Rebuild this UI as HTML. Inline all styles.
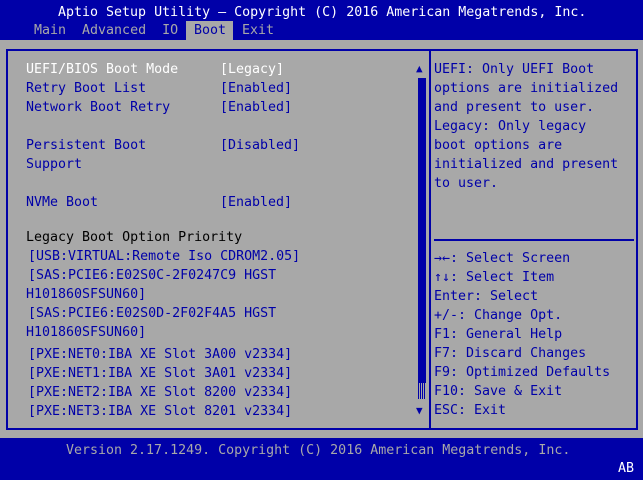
<!DOCTYPE html>
<html><head><style>
*{margin:0;padding:0}
body{width:643px;height:480px;background:#a8a8a8;position:relative;overflow:hidden;font-family:"DejaVu Sans Mono","Liberation Mono",monospace;font-size:13.3px;line-height:19px}
.a{position:absolute;white-space:pre}
.w{color:#fff}.b{color:#0000a8}.k{color:#000}.g{color:#a8a8a8}
</style></head><body>
<div class="a" style="left:0;top:0;width:643px;height:40px;background:#0000a8"></div>
<div class="a" style="left:186px;top:21px;width:47px;height:19px;background:#a8a8a8"></div>
<div class="a w" style="left:58px;top:3px">Aptio Setup Utility – Copyright (C) 2016 American Megatrends, Inc.</div>
<div class="a g" style="left:34px;top:21px">Main  Advanced  IO  </div>
<div class="a b" style="left:194px;top:21px">Boot</div>
<div class="a g" style="left:242px;top:21px">Exit</div>
<div class="a" style="left:6px;top:49px;width:628px;height:377px;border:2px solid #0000a8"></div>
<div class="a" style="left:429px;top:49px;width:2px;height:381px;background:#0000a8"></div>
<div class="a" style="left:434px;top:239px;width:200px;height:2px;background:#0000a8"></div>
<div class="a" style="left:418px;top:78px;width:8px;height:305px;background:#0000a8"></div>
<div class="a" style="left:418px;top:383px;width:8px;height:16px;background:repeating-linear-gradient(90deg,#0000a8 0 1px,#a8a8a8 1px 2px)"></div>
<div class="a b" style="left:416px;top:59px;font-size:11px">▲</div>
<div class="a b" style="left:416px;top:401px;font-size:11px">▼</div>
<div class="a w" style="left:26px;top:60px">UEFI/BIOS Boot Mode</div><div class="a w" style="left:220px;top:60px">[Legacy]</div>
<div class="a b" style="left:26px;top:79px">Retry Boot List</div><div class="a b" style="left:220px;top:79px">[Enabled]</div>
<div class="a b" style="left:26px;top:98px">Network Boot Retry</div><div class="a b" style="left:220px;top:98px">[Enabled]</div>
<div class="a b" style="left:26px;top:136px">Persistent Boot</div><div class="a b" style="left:220px;top:136px">[Disabled]</div>
<div class="a b" style="left:26px;top:155px">Support</div>
<div class="a b" style="left:26px;top:193px">NVMe Boot</div><div class="a b" style="left:220px;top:193px">[Enabled]</div>
<div class="a k" style="left:26px;top:228px">Legacy Boot Option Priority</div>
<div class="a b" style="left:28px;top:247px">[USB:VIRTUAL:Remote Iso CDROM2.05]</div>
<div class="a b" style="left:28px;top:266px">[SAS:PCIE6:E02S0C-2F0247C9 HGST</div>
<div class="a b" style="left:26px;top:285px">H101860SFSUN60]</div>
<div class="a b" style="left:28px;top:304px">[SAS:PCIE6:E02S0D-2F02F4A5 HGST</div>
<div class="a b" style="left:26px;top:323px">H101860SFSUN60]</div>
<div class="a b" style="left:28px;top:345px">[PXE:NET0:IBA XE Slot 3A00 v2334]</div>
<div class="a b" style="left:28px;top:364px">[PXE:NET1:IBA XE Slot 3A01 v2334]</div>
<div class="a b" style="left:28px;top:383px">[PXE:NET2:IBA XE Slot 8200 v2334]</div>
<div class="a b" style="left:28px;top:402px">[PXE:NET3:IBA XE Slot 8201 v2334]</div>
<div class="a b" style="left:434px;top:60px">UEFI: Only UEFI Boot
options are initialized
and present to user.
Legacy: Only legacy
boot options are
initialized and present
to user.</div>
<div class="a b" style="left:434px;top:249px">→←: Select Screen
↑↓: Select Item
Enter: Select
+/-: Change Opt.
F1: General Help
F7: Discard Changes
F9: Optimized Defaults
F10: Save &amp; Exit
ESC: Exit</div>
<div class="a" style="left:0;top:438px;width:643px;height:42px;background:#0000a8"></div>
<div class="a g" style="left:66px;top:441px">Version 2.17.1249. Copyright (C) 2016 American Megatrends, Inc.</div>
<div class="a w" style="left:618px;top:459px">AB</div>
</body></html>
